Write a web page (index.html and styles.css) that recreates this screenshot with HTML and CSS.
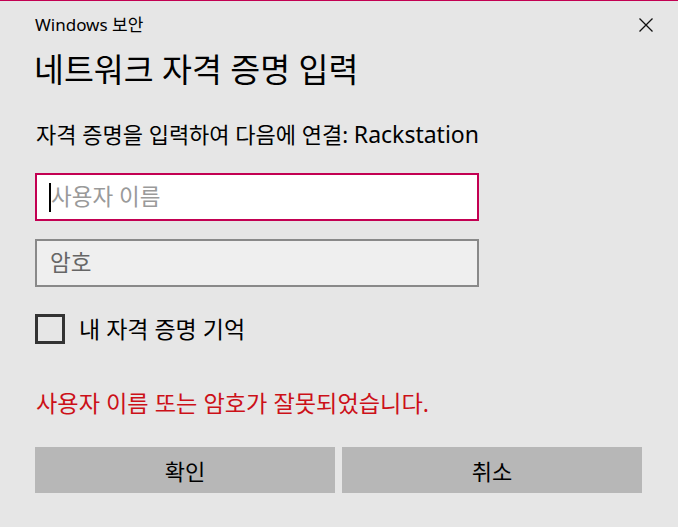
FILE: index.html
```html
<!DOCTYPE html>
<html lang="ko">
<head>
<meta charset="utf-8">
<title>Windows 보안</title>
<link rel="stylesheet" href="styles.css">
</head>
<body>
<div class="dialog">
  <div class="top">
    <span class="app">Windows 보안</span>
    <button class="close" aria-label="닫기">
      <svg width="14" height="14" viewBox="0 0 14 14"><path d="M0.5 0.5 L13.5 13.5 M13.5 0.5 L0.5 13.5" stroke="#111" stroke-width="1.3" fill="none"/></svg>
    </button>
  </div>
  <h1 class="title">네트워크 자격 증명 입력</h1>
  <p class="sub">자격 증명을 입력하여 다음에 연결: <span class="host">Rackstation</span></p>
  <div class="field focus"><span class="caret"></span><span class="ph">사용자 이름</span></div>
  <div class="field pw"><span class="ph dark">암호</span></div>
  <label class="check"><span class="box"></span><span>내 자격 증명 기억</span></label>
  <p class="err">사용자 이름 또는 암호가 잘못되었습니다.</p>
  <div class="buttons">
    <button class="btn">확인</button>
    <button class="btn">취소</button>
  </div>
</div>
</body>
</html>
```
FILE: styles.css
```css
html, body {
  margin: 0;
  padding: 0;
  background: #e6e6e6;
}
body {
  width: 678px;
  height: 527px;
  overflow: hidden;
  font-family: "Noto Sans", "Noto Sans CJK KR", sans-serif;
  color: #000;
}
.dialog {
  border-top: 1px solid #c30052;
  padding: 0 35px;
  height: 526px;
}
.top {
  display: flex;
  justify-content: space-between;
  align-items: center;
  padding-top: 14px;
  height: 20px;
}
.app {
  font-size: 17px;
  line-height: 20px;
}
.close {
  border: 0;
  background: none;
  padding: 0;
  margin-right: -10px;
  width: 14px;
  height: 14px;
  display: flex;
}
.title {
  margin: 17px 0 0 -1px;
  font-size: 32.5px;
  font-weight: normal;
  line-height: 36px;
}
.sub {
  margin: 34px 0 0 1px;
  font-size: 22px;
  line-height: 24px;
}
.host {
  font-size: 23px;
}
.field {
  margin-top: 27px;
  width: 444px;
  height: 48px;
  box-sizing: border-box;
  border: 2px solid #c30052;
  background: #fff;
  display: flex;
  align-items: center;
  padding-left: 12px;
  position: relative;
}
.field.pw {
  margin-top: 18px;
  border-color: #898989;
  background: #efefef;
}
.caret {
  width: 2px;
  height: 29px;
  background: #000;
}
.ph {
  font-size: 22.5px;
  line-height: 24px;
  color: #9a9a9a;
}
.ph.dark {
  color: #666;
  margin-left: 1px;
}
.check {
  margin-top: 27px;
  display: flex;
  align-items: center;
  gap: 14px;
  font-size: 23px;
  line-height: 30px;
}
.box {
  width: 30px;
  height: 30px;
  box-sizing: border-box;
  border: 3px solid #333;
}
.err {
  margin: 47px 0 0 1px;
  font-size: 23.2px;
  line-height: 24px;
  color: #cc1018;
}
.buttons {
  margin-top: 32px;
  display: flex;
  gap: 7px;
}
.btn {
  width: 300px;
  height: 46px;
  border: 0;
  background: #b7b7b7;
  font-family: "Noto Sans", "Noto Sans CJK KR", sans-serif;
  font-size: 22px;
  color: #000;
  padding: 0;
}
```
